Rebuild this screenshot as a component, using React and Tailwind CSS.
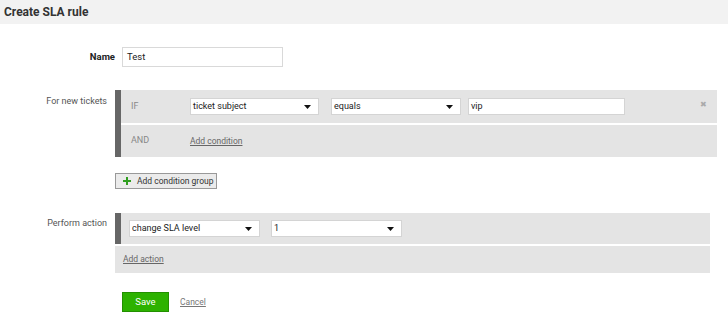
import React from 'react'

function Caret() {
  return (
    <svg width="7" height="4" viewBox="0 0 7 4" className="shrink-0">
      <path d="M0 0 L7 0 L3.5 4 Z" fill="#111" />
    </svg>
  )
}

function PlusIcon() {
  return (
    <svg width="8" height="8" viewBox="0 0 8 8" className="shrink-0">
      <path d="M3 0 H5 V3 H8 V5 H5 V8 H3 V5 H0 V3 H3 Z" fill="#2f9e1f" />
    </svg>
  )
}

function FakeSelect({ value, width }) {
  return (
    <div className={`flex items-center justify-between h-[17px] bg-white border border-[#d4d4d4] pl-[2px] pr-[7px] text-[9px] text-[#222] ${width}`}>
      <span>{value}</span>
      <Caret />
    </div>
  )
}

function App() {
  return (
    <div className="w-[728px] h-[321px] bg-white font-['Roboto','Liberation_Sans',sans-serif] text-[#333]">
      {/* Header */}
      <div className="h-[24px] bg-[#f2f2f2] flex items-center pl-[4px]">
        <h1 className="text-[12px] font-bold text-[#333]">Create SLA rule</h1>
      </div>

      {/* Name */}
      <div className="flex items-center mt-[23px]">
        <div className="w-[115px] text-right text-[9.5px] font-bold text-[#222]">Name</div>
        <div className="ml-[7px] w-[161px] h-[20px] border border-[#d9d9d9] bg-white flex items-center pl-[4px] text-[9.5px] text-[#222]">
          Test
        </div>
      </div>

      {/* For new tickets */}
      <div className="flex mt-[23px]">
        <div className="w-[107px] text-right text-[9px] text-[#555] pt-[5px]">For new tickets</div>
        <div className="ml-[8px] flex w-[602px]">
          <div className="w-[6px] bg-[#666]"></div>
          <div className="flex-1 flex flex-col">
            <div className="h-[33px] bg-[#e4e4e4] flex items-center text-[9px] relative">
              <span className="w-[69px] pl-[10px] text-[#888]">IF</span>
              <FakeSelect value="ticket subject" width="w-[129px]" />
              <div className="w-[12px]"></div>
              <FakeSelect value="equals" width="w-[130px]" />
              <div className="w-[7px]"></div>
              <div className="w-[157px] h-[17px] bg-white border border-[#d4d4d4] pl-[2px] flex items-center text-[9px] text-[#222]">vip</div>
              <span className="absolute right-[10px] top-[11px] text-[8px] text-[#aaa] leading-none">✖</span>
            </div>
            <div className="h-[2px] bg-white"></div>
            <div className="h-[32px] bg-[#e4e4e4] flex items-center text-[8.5px]">
              <span className="w-[69px] pl-[10px] text-[#888] text-[9px]">AND</span>
              <span className="text-[#666] underline">Add condition</span>
            </div>
          </div>
        </div>
      </div>

      {/* Add condition group */}
      <div className="flex mt-[16px]">
        <div className="w-[115px]"></div>
        <button className="h-[16px] w-[102px] bg-[#ebebeb] border border-[#999] flex items-center pl-[7px] gap-[6px] text-[8.5px] text-[#333] whitespace-nowrap">
          <PlusIcon />
          Add condition group
        </button>
      </div>

      {/* Perform action */}
      <div className="flex mt-[24px]">
        <div className="w-[107px] text-right text-[9px] text-[#555] pt-[4px]">Perform action</div>
        <div className="ml-[8px] flex flex-col w-[595px]">
          <div className="flex h-[31px]">
            <div className="w-[6px] bg-[#666]"></div>
            <div className="flex-1 bg-[#e4e4e4] flex items-center pl-[8px]">
              <FakeSelect value="change SLA level" width="w-[131px]" />
              <div className="w-[11px]"></div>
              <FakeSelect value="1" width="w-[131px]" />
            </div>
          </div>
          <div className="h-[2px] bg-white"></div>
          <div className="h-[27px] bg-[#e4e4e4] flex items-center pl-[8px] text-[8.5px]">
            <span className="text-[#666] underline">Add action</span>
          </div>
        </div>
      </div>

      {/* Buttons */}
      <div className="flex items-center mt-[19px]">
        <div className="w-[122px]"></div>
        <button className="w-[47px] h-[20px] bg-[#2db200] border border-[#239000] text-white text-[9.5px]">Save</button>
        <span className="ml-[11px] text-[8.5px] text-[#777] underline">Cancel</span>
      </div>
    </div>
  )
}

export default App
